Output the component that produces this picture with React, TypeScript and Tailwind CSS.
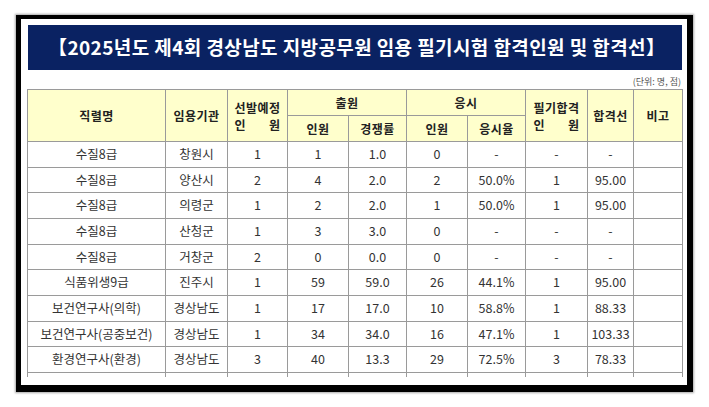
import React from 'react';

type Row = {
    job: string;
    org: string;
    plan: string;
    applied: string;
    ratio: string;
    took: string;
    rate: string;
    passed: string;
    cutoff: string;
};

const rows: Row[] = [
    { job: '수질8급', org: '창원시', plan: '1', applied: '1', ratio: '1.0', took: '0', rate: '-', passed: '-', cutoff: '-' },
    { job: '수질8급', org: '양산시', plan: '2', applied: '4', ratio: '2.0', took: '2', rate: '50.0%', passed: '1', cutoff: '95.00' },
    { job: '수질8급', org: '의령군', plan: '1', applied: '2', ratio: '2.0', took: '1', rate: '50.0%', passed: '1', cutoff: '95.00' },
    { job: '수질8급', org: '산청군', plan: '1', applied: '3', ratio: '3.0', took: '0', rate: '-', passed: '-', cutoff: '-' },
    { job: '수질8급', org: '거창군', plan: '2', applied: '0', ratio: '0.0', took: '0', rate: '-', passed: '-', cutoff: '-' },
    { job: '식품위생9급', org: '진주시', plan: '1', applied: '59', ratio: '59.0', took: '26', rate: '44.1%', passed: '1', cutoff: '95.00' },
    { job: '보건연구사(의학)', org: '경상남도', plan: '1', applied: '17', ratio: '17.0', took: '10', rate: '58.8%', passed: '1', cutoff: '88.33' },
    { job: '보건연구사(공중보건)', org: '경상남도', plan: '1', applied: '34', ratio: '34.0', took: '16', rate: '47.1%', passed: '1', cutoff: '103.33' },
    { job: '환경연구사(환경)', org: '경상남도', plan: '3', applied: '40', ratio: '13.3', took: '29', rate: '72.5%', passed: '3', cutoff: '78.33' },
    { job: '', org: '', plan: '', applied: '', ratio: '', took: '', rate: '', passed: '', cutoff: '' },
];

const widths = [138, 62, 60, 61, 58, 61, 58, 62, 46, 49];

const th = 'border border-[#9a9a9a] bg-[#ffffcc] font-bold text-[#222] text-[12px] tracking-[0.5px] text-center align-middle p-0';
const td = 'border border-[#9a9a9a] text-[12.5px] text-[#333] text-center align-middle p-0 h-[25.67px]';

const TwoLine: React.FC<{ top: string }> = ({ top }) => (
    <div className="inline-flex flex-col leading-[17px]">
        <span>{top}</span>
        <span className="flex justify-between">
            <span>인</span>
            <span>원</span>
        </span>
    </div>
);

export default function App() {
    return (
        <div
            className="w-[709px] h-[407px] bg-white overflow-hidden pt-[15px] pl-[16px]"
            style={{ fontFamily: '"Noto Sans CJK KR", "Noto Sans", sans-serif' }}
        >
            <div className="w-[677px] h-[377px] bg-white border-black border-l-[5px] border-t-[4px] border-r-[6px] border-b-[7px] shadow-[0_0_2px_1px_rgba(0,0,0,0.35)] flex flex-col pt-[6px] pl-[6px] pr-[4px] overflow-hidden">
                <div className="ml-[1px] w-[654px] h-[45px] shrink-0 bg-[#0a2262] flex items-center pl-[20px]">
                    <span className="text-white font-bold text-[19px] tracking-[0.4px]">
                        【2025년도 제4회 경상남도 지방공무원 임용 필기시험 합격인원 및 합격선】
                    </span>
                </div>
                <div className="h-[19px] shrink-0 flex items-center justify-end pr-[2px] pt-[5px] text-[9px] text-[#555]">
                    (단위: 명, 점)
                </div>
                <div className="h-[288px] overflow-hidden shrink-0">
                    <table className="border-collapse table-fixed w-[655px]">
                        <colgroup>
                            {widths.map((w, i) => (
                                <col key={i} style={{ width: w }} />
                            ))}
                        </colgroup>
                        <thead>
                            <tr className="h-[26px]">
                                <th rowSpan={2} className={th}>직렬명</th>
                                <th rowSpan={2} className={th}>임용기관</th>
                                <th rowSpan={2} className={th}><TwoLine top="선발예정" /></th>
                                <th colSpan={2} className={th}>출원</th>
                                <th colSpan={2} className={th}>응시</th>
                                <th rowSpan={2} className={th}><TwoLine top="필기합격" /></th>
                                <th rowSpan={2} className={th}>합격선</th>
                                <th rowSpan={2} className={th}>비고</th>
                            </tr>
                            <tr className="h-[26px]">
                                <th className={th}>인원</th>
                                <th className={th}>경쟁률</th>
                                <th className={th}>인원</th>
                                <th className={th}>응시율</th>
                            </tr>
                        </thead>
                        <tbody>
                            {rows.map((r, i) => (
                                <tr key={i}>
                                    <td className={td}>{r.job}</td>
                                    <td className={td}>{r.org}</td>
                                    <td className={td}>{r.plan}</td>
                                    <td className={td}>{r.applied}</td>
                                    <td className={td}>{r.ratio}</td>
                                    <td className={td}>{r.took}</td>
                                    <td className={td}>{r.rate}</td>
                                    <td className={td}>{r.passed}</td>
                                    <td className={td}>{r.cutoff}</td>
                                    <td className={td}></td>
                                </tr>
                            ))}
                        </tbody>
                    </table>
                </div>
            </div>
        </div>
    );
}
